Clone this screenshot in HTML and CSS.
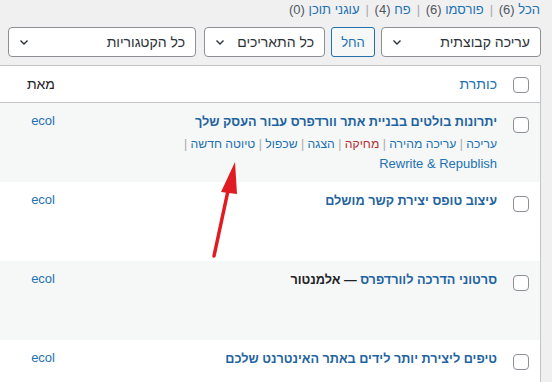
FILE: index.html
```html
<!DOCTYPE html>
<html lang="he" dir="rtl">
<head>
  <meta charset="UTF-8">
  <meta name="viewport" content="width=device-width, initial-scale=1.0">
  <title>פוסטים</title>
  <link rel="stylesheet" href="styles.css">
</head>
<body>
  <div class="wrap">
    <!-- Filtres de statut -->
    <ul class="subsubsub">
      <li><a href="#">הכל <span class="count">(6)</span></a> <span class="sep">|</span></li>
      <li><a href="#">פורסמו <span class="count">(6)</span></a> <span class="sep">|</span></li>
      <li><a href="#">פח <span class="count">(4)</span></a> <span class="sep">|</span></li>
      <li><a href="#">עוגני תוכן <span class="count">(0)</span></a></li>
    </ul>

    <!-- Actions de la liste -->
    <div class="tablenav">
      <div class="select bulk">
        <span>עריכה קבוצתית</span>
        <svg width="12" height="12" viewBox="0 0 12 12"><path d="M2.5 4.5L6 8l3.5-3.5" fill="none" stroke="#2c3338" stroke-width="1.4"/></svg>
      </div>
      <button class="button">החל</button>
      <div class="select dates">
        <span>כל התאריכים</span>
        <svg width="12" height="12" viewBox="0 0 12 12"><path d="M2.5 4.5L6 8l3.5-3.5" fill="none" stroke="#2c3338" stroke-width="1.4"/></svg>
      </div>
      <div class="select cats">
        <span>כל הקטגוריות</span>
        <svg width="12" height="12" viewBox="0 0 12 12"><path d="M2.5 4.5L6 8l3.5-3.5" fill="none" stroke="#2c3338" stroke-width="1.4"/></svg>
      </div>
    </div>

    <table class="posts">
      <thead>
        <tr>
          <td class="check"><span class="cb"></span></td>
          <th class="col-title"><a href="#">כותרת</a></th>
          <th class="col-author">מאת</th>
        </tr>
      </thead>
      <tbody>
        <tr class="alt">
          <td class="check"><span class="cb"></span></td>
          <td class="col-title">
            <strong class="row-title"><a href="#">יתרונות בולטים בבניית אתר וורדפרס עבור העסק שלך</a></strong>
            <div class="row-actions visible">
              <span><a href="#">עריכה</a> <i>|</i></span>
              <span><a href="#">עריכה מהירה</a> <i>|</i></span>
              <span><a href="#" class="delete">מחיקה</a> <i>|</i></span>
              <span><a href="#">הצגה</a> <i>|</i></span>
              <span><a href="#">שכפול</a> <i>|</i></span>
              <span><a href="#">טיוטה חדשה</a> <i>|</i></span>
              <span><a href="#" class="latin" dir="ltr">Rewrite &amp; Republish</a></span>
            </div>
          </td>
          <td class="col-author"><a href="#">ecol</a></td>
        </tr>
        <tr>
          <td class="check"><span class="cb"></span></td>
          <td class="col-title">
            <strong class="row-title"><a href="#">עיצוב טופס יצירת קשר מושלם</a></strong>
            <div class="row-actions">
              <span><a href="#">עריכה</a> <i>|</i></span>
              <span><a href="#" class="latin">Rewrite &amp; Republish</a></span>
            </div>
          </td>
          <td class="col-author"><a href="#">ecol</a></td>
        </tr>
        <tr class="alt">
          <td class="check"><span class="cb"></span></td>
          <td class="col-title">
            <strong class="row-title"><a href="#">סרטוני הדרכה לוורדפרס</a> <span class="state">— אלמנטור</span></strong>
            <div class="row-actions">
              <span><a href="#">עריכה</a> <i>|</i></span>
              <span><a href="#" class="latin">Rewrite &amp; Republish</a></span>
            </div>
          </td>
          <td class="col-author"><a href="#">ecol</a></td>
        </tr>
        <tr>
          <td class="check"><span class="cb"></span></td>
          <td class="col-title">
            <strong class="row-title"><a href="#">טיפים ליצירת יותר לידים באתר האינטרנט שלכם</a></strong>
            <div class="row-actions">
              <span><a href="#">עריכה</a> <i>|</i></span>
              <span><a href="#" class="latin">Rewrite &amp; Republish</a></span>
            </div>
          </td>
          <td class="col-author"><a href="#">ecol</a></td>
        </tr>
      </tbody>
    </table>
  </div>

  <!-- Flèche d'annotation -->
  <svg class="arrow" width="552" height="382" viewBox="0 0 552 382">
    <line x1="214" y1="256" x2="229" y2="186" stroke="#e01b22" stroke-width="3.5" stroke-linecap="round"/>
    <polygon points="235,162 221,192 237,194" fill="#e01b22"/>
  </svg>
</body>
</html>
```

FILE: styles.css
```css
/* Général */
* {
  margin: 0;
  padding: 0;
  box-sizing: border-box;
}

body {
  font-family: 'Liberation Sans', 'DejaVu Sans', sans-serif;
  font-size: 13px;
  background-color: #f0f0f1;
  color: #3c434a;
  direction: rtl;
  width: 552px;
  height: 382px;
  overflow: hidden;
  position: relative;
}

a {
  color: #2271b1;
  text-decoration: none;
}

.wrap {
  padding-right: 11px;
}

/* Filtres de statut */
.subsubsub {
  list-style: none;
  display: flex;
  gap: 4px;
  height: 20px;
  line-height: 20px;
  padding-right: 1px;
}

.subsubsub .count {
  color: #50575e;
}

.subsubsub .sep {
  color: #a7aaad;
  margin: 0 2px;
}

/* Barre d'actions */
.tablenav {
  display: flex;
  margin-top: 7px;
  height: 30px;
  white-space: nowrap;
}

.select {
  height: 30px;
  border: 1px solid #8c8f94;
  border-radius: 4px;
  background-color: #fff;
  color: #2c3338;
  font-size: 14px;
  display: flex;
  justify-content: space-between;
  align-items: center;
  padding: 0 10px 0 9px;
  flex-shrink: 0;
}

.bulk {
  width: 160px;
}

.dates {
  width: 121px;
  margin-right: 6px;
}

.cats {
  width: 188px;
  margin-right: 8px;
}

.button {
  height: 30px;
  width: 44px;
  margin-right: 6px;
  border: 1px solid #2271b1;
  border-radius: 3px;
  background-color: #f6f7f7;
  color: #2271b1;
  font-family: inherit;
  font-size: 13px;
  flex-shrink: 0;
}

/* Tableau des articles */
.posts {
  width: 541px;
  margin-top: 8px;
  border-spacing: 0;
  table-layout: fixed;
  background-color: #fff;
  border-top: 1px solid #c3c4c7;
  border-right: 1px solid #c3c4c7;
  box-shadow: 0 1px 1px rgba(0, 0, 0, 0.04);
}

.posts thead th,
.posts thead td {
  border-bottom: 1px solid #c3c4c7;
  font-size: 14px;
  font-weight: normal;
  line-height: 20px;
  padding: 8px 10px;
  text-align: right;
  color: #1d2327;
}

.posts thead .check {
  padding: 11px 11px 0 7px;
  vertical-align: top;
}

.posts tbody td {
  vertical-align: top;
  padding: 8px 10px;
}

.posts tr.alt {
  background-color: #f6f7f7;
}

.check {
  width: 33px;
}

.posts tbody .check {
  padding: 14px 11px 0 6px;
}

.col-author {
  width: 65px;
}

.posts tbody .col-author {
  line-height: 20px;
}

.cb {
  display: block;
  width: 16px;
  height: 16px;
  border: 1px solid #8c8f94;
  border-radius: 4px;
  background-color: #fff;
}

.row-title {
  display: block;
  font-size: 12.7px;
  font-weight: bold;
  line-height: 23px;
}

.row-title a {
  color: #1f64a0;
}

.row-title .state {
  color: #1d2327;
}

.row-actions {
  visibility: hidden;
  font-size: 12.2px;
  line-height: 20px;
  height: 40px;
}

.row-actions.visible {
  visibility: visible;
}

.row-actions span {
  white-space: nowrap;
}

.row-actions .latin {
  font-size: 13px;
}

.row-actions i {
  font-style: normal;
  color: #a7aaad;
}

.row-actions .delete {
  color: #b32d2e;
}

/* Flèche */
.arrow {
  position: absolute;
  top: 0;
  left: 0;
  pointer-events: none;
}
```
